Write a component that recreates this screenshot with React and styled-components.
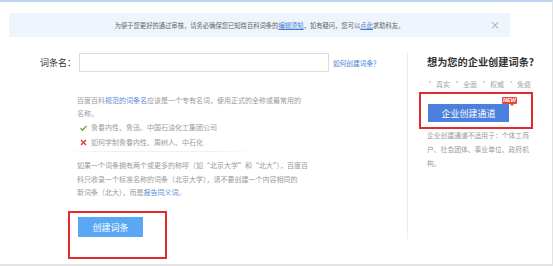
import React from "react";
import styled, { createGlobalStyle } from "styled-components";

const Global = createGlobalStyle`
  html, body { margin: 0; padding: 0; background: #fff; }
  body { font-family: "Noto Sans CJK SC", "Noto Sans", sans-serif; }
  * { box-sizing: border-box; }
`;

const Page = styled.div`
  width: 553px;
  height: 266px;
  border-top: 2px solid #b9d6f4;
  border-right: 1px solid #e2e2e2;
  border-bottom: 2px solid #e4e4e4;
  overflow: hidden;
`;

const Notice = styled.div`
  margin: 11px 42px 0 9px;
  height: 24px;
  background: #eef5fc;
  display: grid;
  grid-template-columns: 1fr auto 1fr;
  align-items: center;
  font-size: 6.3px;
  color: #666;
`;

const NoticeText = styled.div`
  grid-column: 2;
  white-space: nowrap;
`;

const Link = styled.a`
  color: ${(p) => p.$color || "#3f7ad6"};
  text-decoration: ${(p) => (p.$underline ? "underline" : "none")};
`;

const Close = styled.span`
  grid-column: 3;
  justify-self: end;
  margin-right: 10px;
  font-size: 10px;
  color: #a0a0a0;
  line-height: 1;
`;

const Body = styled.div`
  display: flex;
  margin-top: 16px;
`;

const LeftCol = styled.div`
  width: 407px;
  padding-left: 40px;
`;

const FormRow = styled.div`
  display: flex;
  align-items: center;
  height: 19px;
`;

const Label = styled.label`
  font-size: 9px;
  color: #333;
  white-space: nowrap;
  width: 39px;
`;

const Input = styled.div`
  width: 250px;
  height: 19px;
  border: 1px solid #dcdcdc;
  background: #fff;
`;

const SmallLink = styled.a`
  margin-left: 4px;
  font-size: 6.7px;
  color: #4a80d8;
  white-space: nowrap;
`;

const Desc = styled.div`
  margin: 22px 0 0 37px;
  font-size: 7px;
  color: #9a9a9a;
  white-space: nowrap;
`;

const Para = styled.p`
  margin: ${(p) => p.$mt || 0}px 0 0;
  line-height: ${(p) => p.$lh || 13}px;
`;

const List = styled.ul`
  list-style: none;
  margin: 0;
  padding: 0;
`;

const Item = styled.li`
  display: flex;
  align-items: center;
  line-height: 15px;
  gap: 4px;
  padding-left: 3px;
`;

const Sep = styled.div`
  margin: 1px 0 0 -12px;
  width: 190px;
  height: 1px;
  background: linear-gradient(90deg, rgba(240,240,240,0), #f1f1f1 20%, #f1f1f1 80%, rgba(240,240,240,0));
`;

const RedBox = styled.div`
  position: relative;
  border: 2px solid #e32b2b;
  display: ${(p) => (p.$block ? "block" : "inline-block")};
  padding: ${(p) => p.$pad};
  margin: ${(p) => p.$margin};
  width: ${(p) => p.$w}px;
`;

const Button = styled.button`
  display: flex;
  align-items: center;
  justify-content: center;
  border: none;
  padding: 0;
  width: ${(p) => p.$w}px;
  height: ${(p) => p.$h}px;
  background: ${(p) => p.$bg};
  color: #fff;
  font-family: inherit;
  font-size: 9px;
  cursor: pointer;
`;

const Divider = styled.div`
  width: 1px;
  height: 186px;
  background: #ededed;
  flex-shrink: 0;
`;

const RightCol = styled.div`
  flex: 1;
  padding-left: 19px;
`;

const Heading = styled.h2`
  margin: 1px 0 0;
  font-size: 10.2px;
  line-height: 16px;
  font-weight: 700;
  color: #333;
  white-space: nowrap;
`;

const Tags = styled.div`
  margin-top: 8px;
  display: flex;
  gap: 6px;
  font-size: 7px;
  line-height: 12px;
  color: #a5a5a5;
  padding-left: 2px;
`;

const Tag = styled.span`
  display: flex;
  align-items: center;
  gap: 5px;
  white-space: nowrap;
  &::before {
    content: "";
    width: 2px;
    height: 2px;
    border-radius: 50%;
    background: #c8c8c8;
    margin-top: -4px;
  }
`;

const Badge = styled.span`
  position: absolute;
  left: 81px;
  top: 3px;
  width: 15px;
  height: 7px;
  background: #e8453c;
  color: #fff;
  font-size: 5.5px;
  font-weight: 700;
  font-style: italic;
  line-height: 7px;
  text-align: center;
  font-family: "Liberation Sans", sans-serif;
  border-radius: 1px;
  &::after {
    content: "";
    position: absolute;
    right: 3px;
    bottom: -2px;
    border-left: 2px solid transparent;
    border-right: 2px solid transparent;
    border-top: 2px solid #e8453c;
  }
`;

const RightDesc = styled.p`
  margin: -1px 0 0;
  font-size: 6.8px;
  line-height: 14px;
  color: #9a9a9a;
  white-space: nowrap;
`;

const Check = () => (
  <svg width="7" height="6" viewBox="0 0 7 6">
    <path d="M0.6 3.2 L2.6 5.2 L6.4 0.8" fill="none" stroke="#5ba42e" strokeWidth="1.3" />
  </svg>
);

const Cross = () => (
  <svg width="7" height="7" viewBox="0 0 7 7">
    <path d="M1 1 L6 6 M6 1 L1 6" fill="none" stroke="#e23a3a" strokeWidth="1.4" />
  </svg>
);

export default function App() {
  return (
    <>
      <Global />
      <Page>
        <Notice>
          <NoticeText>
            为便于您更好的通过审核，请务必确保您已知晓百科词条的
            <Link $underline>编辑须知</Link>，如有疑问，您可以
            <Link $underline>点此</Link>求助科友。
          </NoticeText>
          <Close>×</Close>
        </Notice>
        <Body>
          <LeftCol>
            <FormRow>
              <Label>词条名：</Label>
              <Input />
              <SmallLink>如何创建词条？</SmallLink>
            </FormRow>
            <Desc>
              <Para>
                百度百科<Link $color="#5b8bd9">规范的词条名</Link>应该是一个专有名词，使用正式的全称或最常用的
                <br />
                名称。
              </Para>
              <List>
                <Item>
                  <Check />
                  鲁春内性、鲁迅、中国石油化工集团公司
                </Item>
                <Item>
                  <Cross />
                  如何学制鲁春内性、周树人、中石化
                </Item>
              </List>
              <Sep />
              <Para $mt={7} $lh={13.5}>
                如果一个词条拥有两个或更多的称呼（如“北京大学”和“北大”），百度百
                <br />
                科只收录一个标准名称的词条（北京大学），请不要创建一个内容相同的
                <br />
                新词条（北大），而是<Link $color="#5b8bd9">报告同义词</Link>。
              </Para>
              <RedBox $pad="4px 22px 20px 8px" $margin="11.5px 0 0 -9px" $w={99}>
                <Button $w={65} $h={20} $bg="#5aa8f4">创建词条</Button>
              </RedBox>
            </Desc>
          </LeftCol>
          <Divider />
          <RightCol>
            <Heading>想为您的企业创建词条?</Heading>
            <Tags>
              <Tag>真实</Tag>
              <Tag>全面</Tag>
              <Tag>权威</Tag>
              <Tag>免费</Tag>
            </Tags>
            <RedBox $block $pad="10px 0 5px 7px" $margin="2px 0 0 -8px" $w={114}>
              <Badge>NEW</Badge>
              <Button $w={81} $h={18} $bg="#4b80dc">企业创建通道</Button>
            </RedBox>
            <RightDesc>
              企业创建通道不适用于：个体工商
              <br />
              户、社会团体、事业单位、政府机
              <br />
              构。
            </RightDesc>
          </RightCol>
        </Body>
      </Page>
    </>
  );
}
